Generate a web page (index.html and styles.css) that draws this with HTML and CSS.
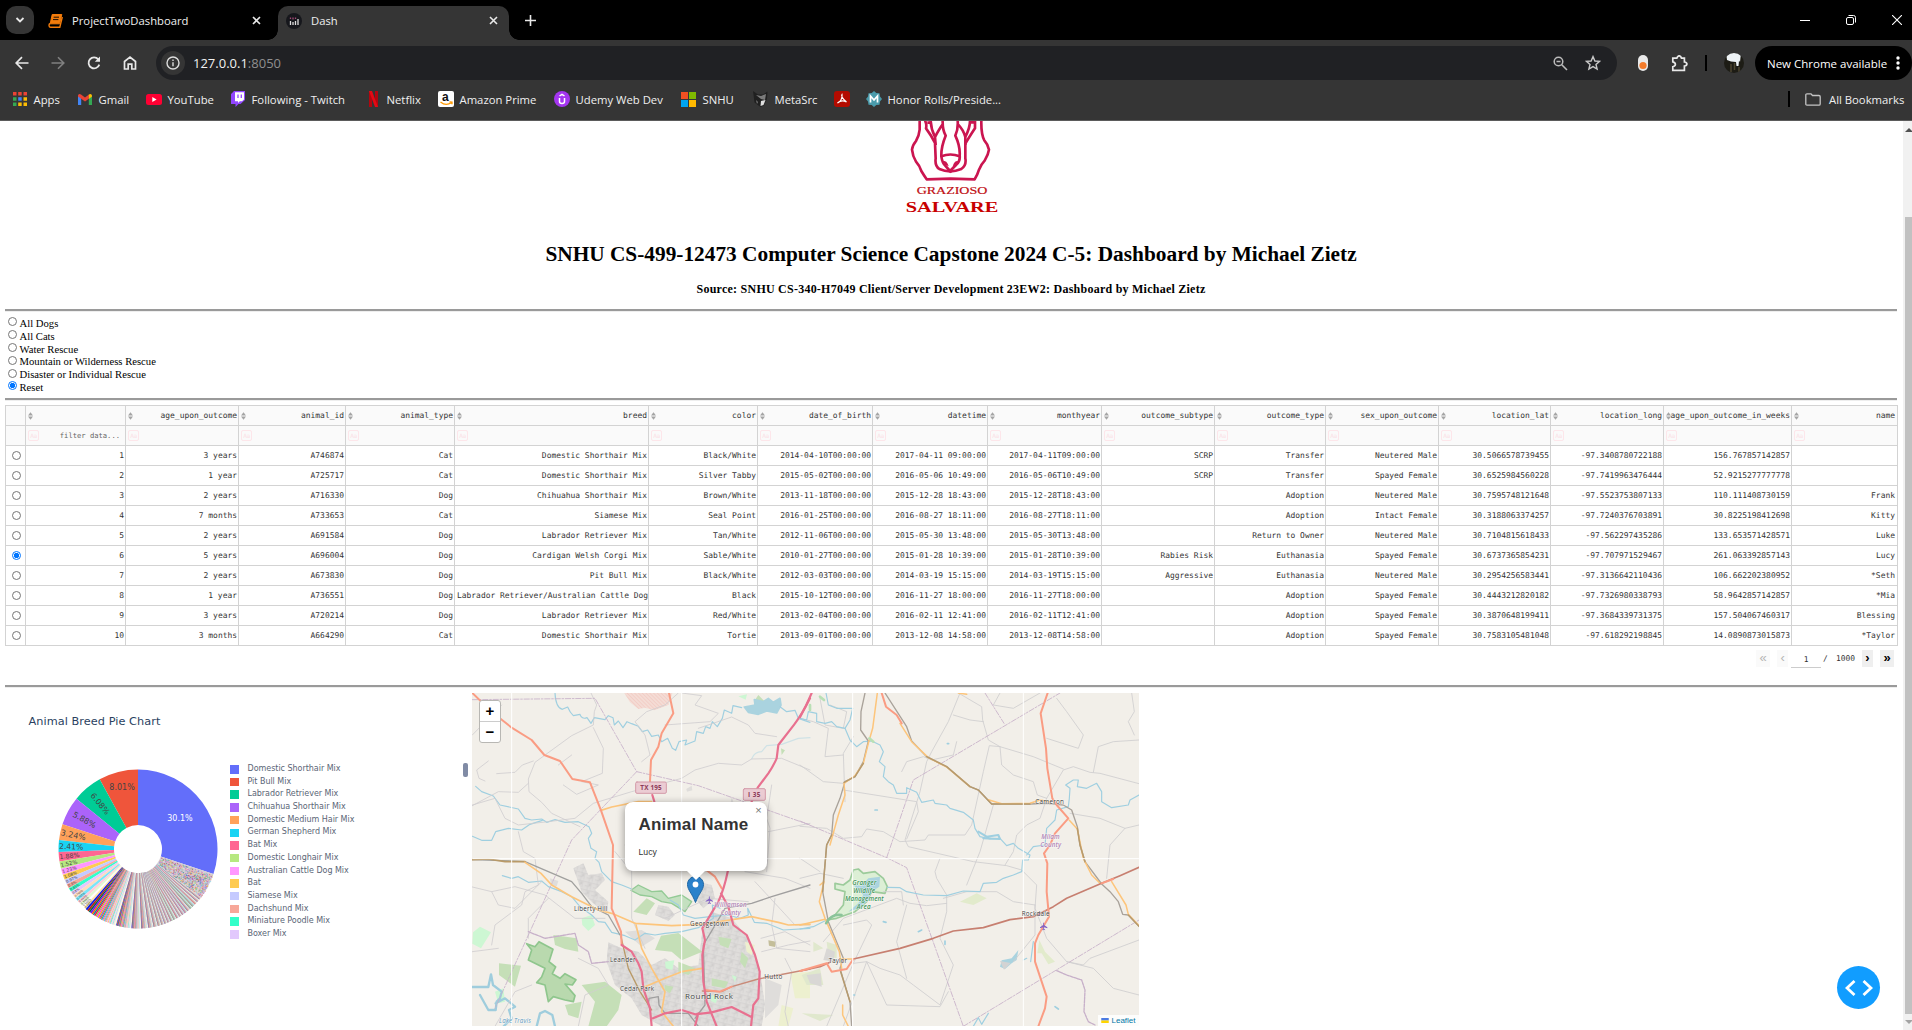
FILE: index.html
```html
<!DOCTYPE html>
<html lang="en">
<head>
<meta charset="utf-8">
<title>Dash</title>
<link rel="stylesheet" href="styles.css">
</head>
<body>
<header class="browser">
  <div class="tabstrip">
    <button class="tab-search"><svg width="10" height="8" viewBox="0 0 10 8"><path d="M1.5 2 5 5.5 8.500 2" fill="none" stroke="#e8e8e8" stroke-width="1.8"/></svg></button>
    <div class="tab tab-idle">
      <svg class="tab-icon" width="15" height="14" viewBox="0 0 15 14"><path d="M4.200 .5H13.800L11.600 9.800H2.200Z" fill="#f37c0b" stroke="#f37c0b" stroke-linejoin="round"/><path d="M2.200 9.500Q.8 10 1 11.600T2.600 13.200H11.800L14.300 3" fill="none" stroke="#f37c0b" stroke-width="1.400"/><path d="M5.600 3.200H11M5 5.600H10.400" stroke="#000" stroke-width=".9"/></svg>
      <span class="tab-title">ProjectTwoDashboard</span>
      <svg class="tab-close" width="9" height="9" viewBox="0 0 9 9"><path d="M1 1 8 8M8 1 1 8" stroke="#e8e8e8" stroke-width="1.6"/></svg>
    </div>
    <div class="tab tab-active">
      <svg class="tab-icon" width="16" height="16" viewBox="0 0 16 16"><circle cx="8" cy="8" r="8" fill="#16171c"/><path d="M4.500 8V12M7 9V12M9.500 8V12M12 6V12" stroke="#ddd" stroke-width="1.3"/><path d="M4.500 4.500V6M7 4.500V6.500M9.500 4.500V6" stroke="#a34a76" stroke-width="1.3"/></svg>
      <span class="tab-title">Dash</span>
      <svg class="tab-close" width="9" height="9" viewBox="0 0 9 9"><path d="M1 1 8 8M8 1 1 8" stroke="#e8e8e8" stroke-width="1.600"/></svg>
    </div>
    <svg class="new-tab" width="11" height="11" viewBox="0 0 11 11"><path d="M5.500 0V11M0 5.500H11" stroke="#e8e8e8" stroke-width="1.600"/></svg>
    <div class="window-buttons">
      <svg width="10" height="10" viewBox="0 0 10 10"><path d="M0 5.500H10" stroke="#fff"/></svg>
      <svg width="10" height="10" viewBox="0 0 10 10"><rect x=".5" y="2.500" width="7" height="7" rx="1.500" fill="none" stroke="#fff"/><path d="M2.500 .5H7.500Q9.500 .5 9.500 2.500V7.500" fill="none" stroke="#fff"/></svg>
      <svg width="10" height="10" viewBox="0 0 10 10"><path d="M0 0 10 10M10 0 0 10" stroke="#fff" stroke-width="1.100"/></svg>
    </div>
  </div>
  <div class="toolbar">
    <svg class="nav" width="14" height="14" viewBox="0 0 14 14"><path d="M13.500 7H1.500M7 1.200 1.200 7 7 12.800" fill="none" stroke="#e8e8e8" stroke-width="1.700"/></svg>
    <svg class="nav" width="14" height="14" viewBox="0 0 14 14"><path d="M.5 7H12.500M7 1.200 12.800 7 7 12.800" fill="none" stroke="#808080" stroke-width="1.600"/></svg>
    <svg class="nav" width="14" height="14" viewBox="0 0 14 14"><path d="M12.300 8.600A5.500 5.500 0 1 1 11.300 3.300" fill="none" stroke="#e8e8e8" stroke-width="1.800"/><path d="M13 .5V5.800H7.800Z" fill="#e8e8e8"/></svg>
    <svg class="nav" width="14" height="14" viewBox="0 0 14 14"><path d="M1.500 5.500 7 1.100 12.500 5.500V13H8.800V8.200H5.200V13H1.500Z" fill="none" stroke="#e8e8e8" stroke-width="1.700"/></svg>
    <div class="omnibox">
      <span class="site-info"><svg width="14" height="14" viewBox="0 0 14 14"><circle cx="7" cy="7" r="6" fill="none" stroke="#ddd" stroke-width="1.400"/><path d="M7 6.200V10.200M7 3.600V5" stroke="#ddd" stroke-width="1.400"/></svg></span>
      <span class="url">127.0.0.1<i>:8050</i></span>
      <svg class="omni-icon" width="15" height="15" viewBox="0 0 15 15"><circle cx="5.500" cy="5.500" r="4.300" fill="none" stroke="#bbb" stroke-width="1.500"/><path d="M3.500 5.500H7.500M8.800 8.800 14 14" stroke="#bbb" stroke-width="1.600"/></svg>
      <svg class="omni-icon" width="16" height="16" viewBox="0 0 16 16"><path d="M8 1.600 9.900 6 14.600 6.400 11 9.500 12.100 14.100 8 11.600 3.900 14.100 5 9.500 1.400 6.400 6.100 6Z" fill="none" stroke="#c8c8c8" stroke-width="1.400"/></svg>
    </div>
    <svg class="ext" width="12" height="16" viewBox="0 0 12 16"><rect x="1" width="10" height="16" rx="5" fill="#e9e9e9"/><circle cx="6" cy="10.500" r="3.600" fill="#f47b2a"/></svg>
    <svg class="puzzle" width="17" height="17" viewBox="0 0 17 17"><path d="M1.800 3.200H5.800Q6.500 .8 8.200 .8T10.500 3.200H13.400V7Q15.900 7.300 15.900 9T13.400 11V15.300H1.800V11.800Q4.400 11.200 4.400 9.300T1.800 6.800Z" fill="none" stroke="#e8e8e8" stroke-width="1.700"/></svg>
    <span class="divider"></span>
    <svg class="avatar" width="20" height="20" viewBox="0 0 20 20"><defs><clipPath id="av"><circle cx="10" cy="10" r="10"/></clipPath></defs><g clip-path="url(#av)"><path fill="#1d1c15" d="M0 0H20V20H0Z"/><path d="M2 0H17L16 9 15 7.500 14.500 13 12.500 13 12 9 7 8.500 3 7Z" fill="#eef3f6"/><path d="M7 11V19M10.500 10V17M15 14V19" stroke="#4c452f" stroke-width="1.500"/></g></svg>
    <div class="update-pill"><span>New Chrome available</span><svg width="4" height="14" viewBox="0 0 4 14"><circle cx="2" cy="2" r="1.700" fill="#fff"/><circle cx="2" cy="7" r="1.700" fill="#fff"/><circle cx="2" cy="12" r="1.700" fill="#fff"/></svg></div>
  </div>
  <nav class="bookmarks">
    <a class="bm bm-apps"><svg width="14" height="14" viewBox="0 0 14 14"><path fill="#ea4335" d="M0 0h3.500v3.500H0zM5.200 0h3.500v3.500H5.200zM10.500 0H14v3.500h-3.500z"/><path fill="#34a853" d="M0 5.200h3.500v3.500H0zM0 10.500h3.500V14H0z"/><path fill="#4285f4" d="M5.200 5.200h3.500v3.500H5.200z"/><path fill="#fbbc04" d="M10.500 5.200H14v3.500h-3.500zM5.200 10.500h3.500V14H5.200zM10.500 10.500H14V14h-3.500z"/></svg>Apps</a>
    <a class="bm bm-gmail"><svg width="14" height="11" viewBox="0 0 14 11"><path fill="#4285f4" d="M0 1.500H3.200V11H0z"/><path fill="#34a853" d="M10.800 1.500H14V11h-3.200z"/><path fill="#ea4335" d="M0 1.500Q.8-.8 3 .5L7 3.600 11 .5 10.800 4.800 7 7.600 3.200 4.800 0 2.500z"/><path fill="#fbbc04" d="M10.800.6Q13.600-.8 14 1.800V2.600L10.800 4.900z"/></svg>Gmail</a>
    <a class="bm bm-youtube"><svg width="16" height="11" viewBox="0 0 16 11"><rect width="16" height="11" rx="2.500" fill="#ff0033"/><path d="M6.300 3 10.600 5.500 6.300 8Z" fill="#fff"/></svg>YouTube</a>
    <a class="bm bm-twitch"><svg width="14" height="16" viewBox="0 0 14 16"><path d="M3 0H14V9L9.500 13H7.500L4.500 16V13H0V3Z" fill="#9146ff"/><path d="M4 1.200H13V8.500L11 10.300H8.800L7 12V10.300H4Z" fill="#fff"/><path d="M7 3.500V7M10.300 3.500V7" stroke="#9146ff" stroke-width="1.300"/></svg>Following - Twitch</a>
    <a class="bm bm-netflix"><svg width="9" height="16" viewBox="0 0 9 16"><path d="M0 0H3V16H0zM6 0H9V16H6z" fill="#b1060f"/><path d="M0 0H3L9 16H6Z" fill="#e50914"/></svg>Netflix</a>
    <a class="bm bm-amazon"><svg width="16" height="16" viewBox="0 0 16 16"><rect width="16" height="16" rx="2" fill="#fff"/><text x="4" y="10" class="amazon-a">a</text><path d="M2.500 11Q8 15.500 13.500 11.500M11.500 10.800 14 11V13.200" fill="none" stroke="#f90" stroke-width="1.300"/></svg>Amazon Prime</a>
    <a class="bm bm-udemy"><svg width="16" height="16" viewBox="0 0 16 16"><circle cx="8" cy="8" r="8" fill="#a435f0"/><path d="M5.500 7V10.500Q5.500 12.500 8 12.500T10.500 10.500V7M5.500 5 8 3.300 10.500 5" fill="none" stroke="#fff" stroke-width="1.500"/></svg>Udemy Web Dev</a>
    <a class="bm bm-snhu"><svg width="15" height="15" viewBox="0 0 15 15"><path fill="#f25022" d="M0 0h7v7H0z"/><path fill="#7fba00" d="M8 0h7v7H8z"/><path fill="#00a4ef" d="M0 8h7v7H0z"/><path fill="#ffb900" d="M8 8h7v7H8z"/></svg>SNHU</a>
    <a class="bm bm-metasrc"><svg width="15" height="16" viewBox="0 0 15 16"><path d="M0 0 5 3.500 10 3.500 14.500 .5 14 8 11 14.500 7.500 16 1.500 11.500Z" fill="#202020"/><path d="M3 4 8 5 13 3 12 9 8 8ZM3 9 5 11 4 13Z" fill="#7b7b7b"/><path d="M8 10 12.500 9 10.500 14 7.500 15Z" fill="#dedede"/></svg>MetaSrc</a>
    <a class="bm bm-acrobat"><svg width="16" height="16" viewBox="0 0 16 16"><rect width="16" height="16" rx="3" fill="#b30b00"/><path d="M8 3.500C7 4.500 8.500 8 12.500 11 8.500 9 6 9.800 3.500 12 6.500 11 8.500 7 8 3.500Z" fill="none" stroke="#fff" stroke-width="1.200"/></svg></a>
    <a class="bm bm-honor"><svg width="16" height="16" viewBox="0 0 16 16"><path d="M8 0 10.300 2 13.500 2.300 14 5.600 16 8 14 10.400 13.500 13.700 10.300 14 8 16 5.700 14 2.500 13.700 2 10.400 0 8 2 5.600 2.500 2.300 5.700 2Z" fill="#4a9bab"/><path d="M4.500 11.500V5L8 9 11.500 5V11.500" fill="none" stroke="#fff" stroke-width="1.700"/></svg>Honor Rolls/Preside...</a>
    <span class="divider bm-divider"></span>
    <a class="bm bm-all"><svg width="16" height="13" viewBox="0 0 16 13"><path d="M.8 2Q.8 .8 2 .8H6L7.500 2.500H14Q15.200 2.500 15.200 3.700V11Q15.200 12.200 14 12.200H2Q.8 12.200 .8 11Z" fill="none" stroke="#c4c4c4" stroke-width="1.300"/></svg>All Bookmarks</a>
  </nav>
</header>

<div class="viewport">
<main class="page">
  <svg class="logo" width="122" height="99" viewBox="0 18 366 297">
    <g fill="none" stroke="#cb1550" stroke-width="8" stroke-linejoin="round">
      <path d="M89 16V44Q87 64 78 78Q67 92 66 104Q68 124 78 140Q89 152 94 168Q103 183 110 193L182 191 254 193Q262 181 267 164Q275 146 284 137Q295 119 297 104Q294 88 283 76Q273 58 274 16"/>
      <path d="M105 16Q111 30 108 40Q124 61 135 84L137 130Q134 153 148 162Q180 176 214 162Q230 151 226 130V86Q244 56 255 40V16"/>
      <path d="M122 18Q123 42 135 66L137 90M135 66Q148 42 158 28M158 16Q157 44 167 62Q153 96 154 124Q157 144 165 151L180 168 198 150Q211 139 209 122Q211 94 196 62Q205 43 203 16M204 28Q220 44 226 66V90M226 66Q240 38 240 18"/>
      <path d="M154 124Q181 113 209 124M112 23H120M242 22H252"/>
    </g>
    <path d="M159 139Q168 135 173 146L176 154 166 149ZM205 139Q196 135 191 146L188 154 199 149ZM176 169H189L182 175Z" fill="#cb1550"/>
    <text x="80" y="237" class="logo-small" textLength="212" lengthAdjust="spacingAndGlyphs">GRAZIOSO</text>
    <text x="47" y="290" class="logo-big" textLength="278" lengthAdjust="spacingAndGlyphs">SALVARE</text>
  </svg>
  <h1>SNHU CS-499-12473 Computer Science Capstone 2024 C-5: Dashboard by Michael Zietz</h1>
  <h5>Source: SNHU CS-340-H7049 Client/Server Development 23EW2: Dashboard by Michael Zietz</h5>
  <hr>
  <div class="filters">
    <label><i class="radio"></i>All Dogs</label>
    <label><i class="radio"></i>All Cats</label>
    <label><i class="radio"></i>Water Rescue</label>
    <label><i class="radio"></i>Mountain or Wilderness Rescue</label>
    <label><i class="radio"></i>Disaster or Individual Rescue</label>
    <label><i class="radio on"></i>Reset</label>
  </div>
  <hr>
  <table class="grid" id="grid"></table>
  <div class="pager">
    <span class="pg off">«</span><span class="pg off narrow">‹</span><span class="pg-input">1</span><span class="pg-sep">/</span><span class="pg-total">1000</span><span class="pg narrow next">›</span><span class="pg last">»</span>
  </div>
  <hr>
  <section class="widgets">
    <div class="chart">
      <h2>Animal Breed Pie Chart</h2>
      <div class="chart-body">
        <svg class="pie" id="pie" width="160" height="160" viewBox="-80 -80 160 160"></svg>
        <ul class="legend" id="legend"></ul>
        <span class="legend-scroll"></span>
      </div>
    </div>
    <div class="map">
      <svg class="map-canvas" width="667" height="333" viewBox="0 0 667 333">
        <defs>
          <pattern id="streets" width="26" height="24" patternUnits="userSpaceOnUse" patternTransform="rotate(14)"><path d="M0 5H26M9 0V24M0 17H15M18 5V24" stroke="#cbc9c9" stroke-width="1.500" fill="none"/><path d="M11 7h6v8h-6z" fill="#d0cecd"/></pattern>
          <pattern id="hatch" width="8" height="8" patternUnits="userSpaceOnUse" patternTransform="rotate(45)"><path d="M0 0H8" stroke="#efb5ac" stroke-width="2"/></pattern>
          <g id="plane"><path d="M-1.300-10Q0-13 1.300-10V-4L11 3V5.500L1.300 2.500V7L4.500 10V12L0 10.500-4.500 12V10L-1.300 7V2.500L-11 5.500V3L-1.300-4Z" fill="#8461c4"/></g>
        </defs>
        <rect width="667" height="333" fill="#f2efe9"/>
        <!-- western half -->
        <g transform="translate(-7 -8) scale(.33333)" fill="none" stroke-linejoin="round" stroke-linecap="round">
          <path d="M478 24H622L610 60 568 76 540 68 520 72 495 52Z" fill="#f4dcd5"/><path d="M478 24H622L610 60 568 76 540 68 520 72 495 52Z" fill="url(#hatch)"/>
          <g fill="#dfdddb">
            <path d="M430 772 470 790 520 800 560 840 600 820 640 850 700 840 712 740 740 680 800 700 850 760 884 850 900 960 890 1024H590L530 990 500 940 450 900 425 830Z"/>
            <path d="M325 550 355 535 370 570 410 565 420 585 390 615 430 650 425 690 380 650 350 620Z"/>
            <path d="M580 660 610 665 630 690 610 708 570 690ZM700 590 740 600 750 640 715 670 690 640ZM900 880 950 900 940 960 900 1000Z"/>
            <path d="M480 740 530 735 570 760 530 785ZM255 580 280 588 275 604 258 600ZM664 312 680 302 682 316 666 320ZM800 335 808 360 796 360Z"/>
          </g>
          <path d="M430 772 470 790 520 800 560 840 600 820 640 850 700 840 712 740 740 680 800 700 850 760 884 850 900 960 890 1024H590L530 990 500 940 450 900 425 830Z" fill="url(#streets)"/>
          <path d="M325 550 355 535 370 570 410 565 420 585 390 615 430 650 425 690 380 650 350 620ZM580 660 610 665 630 690 610 708 570 690ZM700 590 740 600 750 640 715 670 690 640Z" fill="url(#streets)"/>
          <g fill="#c5dfb7">
            <path d="M102 835 168 842 150 905 102 870ZM588 752 640 744 712 800 650 826 620 800 570 795ZM505 680 545 640 570 655 545 690ZM265 750 335 760 340 800 300 792 270 780ZM350 900 420 890 470 930 460 975 425 1024H370L390 950ZM300 960 350 950 340 1000 310 990ZM740 880 790 890 780 910 740 902ZM640 830 690 850 670 870 640 860ZM880 30 910 60 895 70 870 45ZM948 190 960 196 950 210ZM600 900 625 905 615 925 598 915ZM760 755 800 762 790 790 765 780ZM830 800 850 820 840 850 825 830Z"/>
          </g>
          <path d="M24 742 45 725 78 742 48 790 22 776ZM350 700 380 690 390 720 370 738 352 720ZM90 920 115 910 120 950 100 955ZM600 830 628 826 622 855 602 850ZM820 34 846 28 842 44ZM740 930 760 935 752 955 738 948ZM800 870 815 875 810 892Z" fill="#cdf7d3"/>
          <g fill="#edf0cf"><path d="M976 865 1035 860V940H990ZM950 960 985 970 970 1024H940ZM840 770 870 780 860 810 845 800Z"/></g>
          <path d="M910 766 934 770 930 786 912 782Z" fill="#c4be9a"/>
          <path d="M185 776 210 785 222 770 264 793 252 830 272 846 262 866 285 880 300 866 333 884 322 900 300 897 330 932 325 950 300 945 265 935 250 950 240 900 215 893 230 876 240 850 190 825 200 795Z" fill="#b9d9ae" stroke="#8fc68d" stroke-width="5"/>
          <path d="M498 616 520 600 560 620 590 618 610 640 650 630 680 650 660 680 620 655 590 650 560 635 525 630Z" fill="#c4e0c0" stroke="#93ca95" stroke-width="4"/>
          <path d="M838 66 870 60 868 44 895 50 910 40 925 52 945 40 948 60 935 84 905 78 880 88 850 82Z" fill="#aad3df" stroke="#aad3df" stroke-width="5"/>
          <path d="M22 906H70L78 868 84 900 110 920 105 940 95 950 92 975 70 975 45 930M92 955 120 940 150 965 132 975 140 1000 116 1024M215 1024 225 985 240 978 262 990 270 1024" stroke="#9fcddd" stroke-width="7"/>
          <g stroke="#9fcfe0" stroke-width="3.500">
            <path d="M270 24Q272 68 292 73L308 66Q315 83 325 92L345 88Q350 104 366 98L378 115 388 98 420 104 430 92 444 98 448 120 460 108 474 128 486 110 500 116 520 124 532 140 548 135 560 154 580 150 590 170 608 160 622 190 632 196 642 170 665 165 660 180 690 168 695 140 715 145 722 125 735 130 742 110 757 125 772 100 778 75 800 85 804 62 830 68"/>
            <path d="M945 65 965 80 990 76 1000 100 1035 112"/><path d="M860 222Q868 200 890 200L905 182 950 178 1000 160 1035 158" stroke="#cfe2e6"/>
            <path d="M32 304 50 320 85 333 105 360 160 372 180 400 200 405 230 402 245 412 270 404 300 412 340 410 372 425 380 445 370 460 378 490 395 500 390 520 402 532 410 560 440 590 470 600 500 612"/>
            <path d="M22 454 50 466 80 466 92 440 130 430 170 435 195 418 232 406"/>
            <path d="M112 572 140 580 160 575 190 592 230 588 250 605 290 620 320 635 345 665 380 690 400 710 420 712 440 742 480 752 510 765 540 745 570 750 600 745 650 740 700 728 745 700 742 660 765 670"/>
            <path d="M615 645 640 660 655 690 690 700 735 695 790 690 825 700 850 690 848 670 868 712 905 715 955 735 1035 730"/>
          </g>
          <g stroke="#d0ced0" stroke-width="2.500">
            <path d="M378 24 395 60 388 80 385 120 320 152 210 232 190 282 192 320 230 352 260 385 345 425M385 128 415 190 412 265 350 290 400 300 335 328 295 300M190 295 160 322 100 320 22 362M22 360 90 340 120 400 160 420 250 410 330 400 385 355 500 320 650 280 690 255 760 235 830 240 860 222 950 220 1035 255"/>
            <path d="M95 266 150 262 172 240 205 228M70 228 35 255 42 280 60 288M640 24 600 60 545 80 510 110 540 150 555 210 530 230M650 24 710 32 690 60 760 85 735 110 600 120M700 130 800 96 850 120 870 145 935 155M160 440 175 500 210 520 220 600 180 620 170 660 90 720 80 780M22 606 80 620 150 605 240 630 330 700 420 700M80 620 100 660 150 670 230 590M250 640 190 700 190 760M450 500 500 560 500 700 540 790M480 480 640 510 690 570M600 700 730 640 850 650M930 640 920 720 935 790 1035 800M870 590 990 720 1035 720M890 800 970 780 1035 768M910 440 1035 415M920 300 905 400 915 430 905 560M840 560 960 580 1035 610M22 800 100 790M90 1024 150 920 200 900M340 820 400 850 430 900 360 930 340 1024M110 60 22 150M280 240 320 210"/>
            <path d="M960 820 980 860 960 980 970 1024M888 760 960 740 1035 780"/>
          </g>
          <g stroke="#c7b0c9" stroke-width="2.500" stroke-dasharray="16 5 5 5"><path d="M22 44 390 40 515 260 700 302 1035 420M515 260 320 465 90 970"/><path d="M190 740 240 760 330 745 340 780 370 800 380 835 430 830" stroke-width="4" stroke-dasharray="8 3"/></g>
          <path d="M22 524 110 527 180 530 250 560 320 590 350 625 380 665 430 690 465 750" stroke="#a0a09e" stroke-width="4"/>
          <path d="M550 960 552 940 580 935 582 960 600 985 670 985 700 1024M690 1000 720 960 715 780 780 670 860 655 920 635 1035 600" stroke="#a09f9f" stroke-width="4"/>
          <path d="M22 524 70 522 120 530 180 530" stroke="#b99a68" stroke-width="5"/><path d="M468 755 490 850 525 920 560 975" stroke="#b99a68" stroke-width="4"/>
          <g stroke="#fdc57b" stroke-width="5"><path d="M180 532 228 565 260 600 320 635 400 675 440 685 510 715 620 722 710 718 860 695 940 712 970 720 1035 718M408 376 440 366 520 350 560 350M512 715 530 790 560 850 580 885 600 920 590 980 625 1024M540 905 600 880 650 860 712 850"/></g>
          <path d="M712 918 770 920 800 905 880 882 1035 852" stroke="#c88a78" stroke-width="4"/>
          <g stroke="#fa9c83" stroke-width="6"><path d="M22 24 80 80 140 128 200 165 238 210 285 228 322 282 375 292 408 376 444 480 440 670 468 740 470 780M612 24 625 85 590 145 580 185 558 225 555 290M720 552 750 575 770 610M720 915 765 920 800 905"/></g>
          <g stroke="#e8708f" stroke-width="6.500"><path d="M1035 40Q1010 90 988 118L940 180 935 220Q924 245 910 265L878 308 860 350 788 560Q778 610 760 650L712 730 720 765 712 810 715 890 725 950 755 1024M562 330 568 350M768 625 790 665 805 720 845 750 870 810 884 860 880 940 865 960 858 1024M470 780 500 800 520 835 530 860 535 910 555 970 560 1024M564 1000 600 985 650 975 690 988 740 982 800 966 858 995M700 985 690 1024"/></g>
          <path d="M140 24V1024M650 24V1024M22 521H1035" stroke="#fff" stroke-width="3" stroke-linecap="butt"/>
          <g class="shield"><rect x="512" y="291" width="92" height="34" rx="4" fill="#ebccd3" stroke="#d39aa9" stroke-width="3"/><rect x="835" y="311" width="66" height="35" rx="4" fill="#ebccd3" stroke="#d39aa9" stroke-width="3"/><text x="526" y="315" textLength="64">TX 195</text><text x="849" y="336" textLength="37">I 35</text></g>
          <g class="place">
            <text x="327" y="677" textLength="100">Liberty Hill</text><text x="675" y="724" textLength="117">Georgetown</text><text x="435" y="832" textLength="77">Leander</text><text x="465" y="919" textLength="102">Cedar Park</text><text x="898" y="883" textLength="54">Hutto</text><text x="660" y="943" textLength="144" class="city">Round Rock</text>
            <text x="748" y="666" textLength="97" class="county">Williamson</text><text x="767" y="690" textLength="60" class="county">County</text><text x="102" y="1014" textLength="96" class="lake">Lake Travis</text>
          </g>
          <use href="#plane" transform="translate(733 645)"/>
        </g>
        <!-- eastern half -->
        <g transform="translate(328 -8) scale(.33333)" fill="none" stroke-linejoin="round" stroke-linecap="round">
          <path d="M105 595 130 600 150 585 160 555 175 552 190 565 225 560 250 580 262 605 255 625 215 620 200 650 165 680 110 700 80 705 105 690 130 660 135 620 105 612Z" fill="#dcefd5" stroke="#9ccb9b" stroke-width="5"/>
          <path d="M205 580 240 575 238 605 215 620 205 645 180 668 145 680 175 655 190 630 160 600 185 602Z" fill="#aad3df"/>
          <path d="M605 826 635 820 655 795 650 825 635 835 615 852 600 845Z" fill="#aad3df"/><path d="M600 828 632 834 612 854Z" fill="#d3d3d3"/>
          <path d="M718 765 735 800 765 830 745 838 725 805 712 805ZM480 650 530 625 560 640 520 660Z" fill="#e2ebcc"/>
          <path d="M5 870 60 850 70 900 20 900ZM80 770 110 780 110 820 85 815ZM40 770 70 790 40 800ZM5 985 100 990 60 1008Z" fill="#e0e8cd"/><path d="M20 870 62 865 65 905 30 895ZM80 790 105 800 100 830 70 825Z" fill="#d9d7d5"/>
          <g stroke="#d0ced0" stroke-width="2.600">
            <path d="M480 24 445 110 395 200 380 230 360 320 315 465 325 485 520 530 620 542 665 555 710 600 705 670 740 760 800 830 880 850 940 910 1017 930"/>
            <path d="M475 24 545 65 548 105 565 165 600 185 605 240 640 270 700 290 712 330 740 340 790 255 820 245 870 262 900 265 1017 296M600 185 700 215 790 252M460 90 510 105 550 110M130 210 75 215 85 130 40 110 0 100M0 240 70 290 130 295M130 315 350 350 355 380 320 462M135 350 130 205 160 155M0 424 80 430 130 460 185 455 200 432 250 440 300 470 375 465 385 450 495 450 515 420 550 260 568 182 600 185"/>
            <path d="M0 580 60 565 130 580M420 520 405 560 410 580 440 630 440 680 420 760 460 840 420 960 340 900 300 870 240 850 200 830 160 835M440 655 380 662 330 655 290 640 130 700 70 770M430 640 500 620 590 620 640 650 705 660M705 660 705 750 640 830M580 360 540 500 500 600M740 340 720 400 680 420 650 450 640 500 615 540M810 385 900 400 975 430 1017 420M975 430 930 480 920 580M600 24 580 60 640 70 720 24M740 160 835 190 850 150 800 80 770 40M1017 165 940 170 895 185 880 262M995 24 1003 80 985 110 1003 150M60 40 75 120 130 130 140 80 90 60M130 720 200 705 215 720 160 835M320 660 290 770 320 880M130 1024 200 830 260 960 420 965 445 920M0 520 60 560M305 260 320 230 370 215 395 225 460 210 470 170M800 830 850 840 870 820 1017 765M160 835 80 1024M250 620 305 620 310 660"/>
          </g>
          <g stroke="#c7b0c9" stroke-width="2.600" stroke-dasharray="16 5 5 5"><path d="M0 408 260 518 320 548 410 800 490 1024M260 518 340 285 780 24M555 24 612 115M490 1024 1017 705"/><path d="M770 857 800 870 845 885 855 915 852 980 865 1010 885 1020" stroke-width="4" stroke-dasharray="8 3"/></g>
          <g stroke="#9fcfe0" stroke-width="3.500">
            <path d="M0 100 20 105 25 80 50 85 50 110 75 115 95 110 110 125 135 130 150 165 170 185 190 170 215 168 240 180 250 200 238 230 255 245 250 275 265 290 280 300 290 325 320 325 320 308 350 322 365 352 400 345 405 355 440 360 450 370 490 382 520 405 525 430 540 455 570 462 600 460 620 482 640 475 655 490 690 510 685 525 668 525 665 560 640 570 610 580 590 592 550 595 540 620 490 618 440 632 370 630 320 620 300 608 262 607"/>
            <path d="M135 130 150 105 158 70 110 70 85 60 78 24M680 510 700 485 735 480 740 430 765 405 770 375 805 365 808 340 810 310 797 300 820 285 835 285 832 305 860 310 890 295 905 320 905 350 935 368 985 360 990 345 1017 330M0 732 40 725 80 705M520 1024 535 998 545 1018 565 985M700 770 692 830M670 825 680 820"/>
            <path d="M535 440 560 455 595 450 600 462 550 460" stroke-width="6"/>
          </g>
          <path d="M195 24 183 80 182 135 205 168 190 230 165 275 135 290 120 340 100 390 95 450 80 480 68 620 85 710 130 820 120 850 150 950 155 1024M255 24 320 125 335 168 380 215 440 245 510 305 535 315 575 357H690L740 355 790 360 815 375 832 425 840 480 855 530 905 597 930 620 955 650 968 688 985 690 1017 724" stroke="#a9a29a" stroke-width="4"/>
          <g stroke="#fdc57b" stroke-width="4.500"><path d="M232 24 218 130 205 175 190 235 165 272 132 295 135 330 115 390 90 480M60 600 72 590 58 650 75 700 118 800 125 850M128 960 128 990 145 1024M0 720 75 703M475 24 500 28M300 115 335 170 385 218 440 246 510 305M565 344 605 356 690 355 720 345 750 350M808 406 832 432 850 520 875 570 900 595M935 590 978 660 985 688 1017 722M118 822 160 822"/></g>
          <path d="M190 235 165 275 132 292M95 450 80 480 68 620M380 215 440 245 510 305 535 315 575 357 690 357M832 430 840 480 855 530M985 690 1017 724M122 860 150 950" stroke="#b69a6e" stroke-width="4.500"/>
          <path d="M0 858 60 845 90 832M160 822 300 790 400 760 460 738 530 730 550 728 630 704 700 695 760 665 800 640 905 595 960 572 1017 547" stroke="#c77f70" stroke-width="5"/>
          <g stroke="#fa9c83" stroke-width="6"><path d="M743 24 722 85 738 190 742 250 757 340 770 360 805 400 765 445 750 480 732 505 742 535 740 620 747 695 715 750 705 775 705 830 740 935 735 970 715 1024M245 24 258 65 290 90 305 115M0 858 80 835 95 860 140 852 160 822M905 595 940 582"/></g>
          <path d="M35 24Q20 60 0 97" stroke="#e8708f" stroke-width="6.500"/>
          <path d="M78 715Q95 685 125 690" stroke="#8bc39a" stroke-width="7"/><path d="M208 160 220 170M60 35 72 45M30 60V75" stroke="#b9e0b5" stroke-width="8"/><path d="M225 375H232M442 176H446M250 710 258 712M355 740 365 735M765 965 775 972M435 768V778M160 930H164" stroke="#9fcfe0" stroke-width="5"/>
          <path d="M158 24V1024M670 24V1024M0 521H1017" stroke="#fff" stroke-width="3" stroke-linecap="butt"/>
          <g class="place"><text x="706" y="358" textLength="86">Cameron</text><text x="665" y="693" textLength="84">Rockdale</text><text x="86" y="833" textLength="55">Taylor</text>
            <text x="724" y="461" textLength="55" class="county">Milam</text><text x="721" y="485" textLength="62" class="county">County</text>
            <text x="157" y="600" textLength="72" class="park">Granger</text><text x="160" y="624" textLength="65" class="park">Wildlife</text><text x="135" y="648" textLength="116" class="park">Management</text><text x="170" y="671" textLength="42" class="park">Area</text></g>
          <use href="#plane" transform="translate(731 724)"/>
        </g>
      </svg>
      <div class="zoom-control"><span>+</span><span>−</span></div>
      <svg class="marker" width="17" height="27" viewBox="0 0 17 27"><path d="M8.500 .5C4 .5 .5 4 .5 8.500 .5 14 5 17 8.500 26.500 12 17 16.500 14 16.500 8.500 16.500 4 13 .5 8.500 .5Z" fill="#2a81cb" stroke="#2369a5"/><circle cx="8.500" cy="8.500" r="2.900" fill="#fff"/></svg>
      <div class="popup"><span class="popup-close">×</span><strong>Animal Name</strong><p>Lucy</p></div>
      <div class="attribution"><svg width="8" height="5" viewBox="0 0 12 8"><path fill="#4c7be1" d="M0 0h12v4H0z"/><path fill="#ffd500" d="M0 4h12v4H0z"/></svg>Leaflet</div>
    </div>
  </section>
  <button class="debug"><svg width="28" height="16" viewBox="0 0 28 16"><path d="M9.500 1 2 8 9.500 15M18.500 1 26 8 18.500 15" fill="none" stroke="#fff" stroke-width="2.800"/></svg></button>
</main>
<aside class="scrollbar"><span class="arrow up"></span><span class="thumb"></span><span class="arrow down"></span></aside>
</div>
<script src="app.js"></script>
</body>
</html>
```
FILE: styles.css
```css
* { box-sizing: border-box; }
body { margin: 0; width: 1912px; height: 1030px; overflow: hidden; background: #fff; font-family: "Liberation Serif", "Times New Roman", serif; display: flex; flex-direction: column; }
svg { display: block; flex: none; }
button { border: 0; padding: 0; }

/* browser frame */
.browser { height: 121px; flex: none; background: #353535; border-bottom: 1px solid #5b5b5b; color: #f0f0f0; font: 11.7px "Open Sans", "Noto Sans", sans-serif; white-space: nowrap; }
.tabstrip { height: 40px; background: #000; display: flex; align-items: flex-start; padding: 6px 10px 0 6px; }
.tab-search { width: 28px; height: 28px; border-radius: 10px; background: #353535; display: grid; place-items: center; }
.tab { height: 34px; display: flex; align-items: center; padding-bottom: 5px; }
.tab-idle { width: 244px; padding-left: 14px; padding-right: 17px; }
.tab-active { width: 231px; padding-left: 8px; padding-right: 11px; background: #353535; border-radius: 10px 10px 0 0; position: relative; }
.tab-active::before, .tab-active::after { content: ""; position: absolute; bottom: 0; width: 10px; height: 10px; }
.tab-active::before { left: -10px; background: radial-gradient(circle at 0 0, #000 9.500px, #353535 10px); }
.tab-active::after { right: -10px; background: radial-gradient(circle at 100% 0, #000 9.500px, #353535 10px); }
.tab-title { margin-left: 9px; flex: 1; font-size: 11.25px; }
.new-tab { margin: 9px 0 0 15.500px; }
.window-buttons { margin-left: auto; display: flex; gap: 36px; padding-top: 9px; }
.toolbar { height: 46px; display: flex; align-items: center; padding-left: 15px; }
.nav { margin-right: 22px; }
.omnibox { width: 1461px; height: 34px; margin-left: -3px; border-radius: 17px; background: #202124; display: flex; align-items: center; padding: 0 16px 0 5px; }
.site-info { width: 24px; height: 24px; border-radius: 50%; background: #353535; display: grid; place-items: center; }
.url { margin-left: 8px; flex: 1; font-size: 13px; color: #f1f1f1; }
.url i { font-style: normal; color: #8f8f8f; }
.omni-icon { margin-left: 17px; }
.ext { margin-left: 20px; }
.puzzle { margin-left: 22px; }
.divider { width: 2px; height: 16px; background: #000; margin-left: 17px; }
.avatar { margin-left: 17px; }
.update-pill { margin-left: 11px; width: 157px; height: 34px; border-radius: 17px; background: #000; color: #fff; display: flex; align-items: center; justify-content: space-between; padding: 0 12px; font-size: 11.500px; }
.bookmarks { display: flex; align-items: center; height: 28px; padding-right: 7px; margin: -1px 0 0 12.500px; font-size: 11.300px; }
.bm { display: flex; align-items: center; gap: 7px; flex: none; }
.bm-apps { width: 65px; } .bm-gmail { width: 68px; } .bm-youtube { width: 85px; gap: 6px; } .bm-twitch { width: 138px; } .bm-netflix { width: 69px; gap: 9px; }
.bm-amazon { width: 116px; gap: 6px; } .bm-udemy { width: 127px; gap: 6px; } .bm-snhu { width: 72px; } .bm-metasrc { width: 81px; } .bm-acrobat { width: 32px; } .bm-honor { gap: 6px; }
.bm-divider { margin-left: auto; } .bm-all { margin-left: 15px; width: 100px; gap: 8px; }
.amazon-a { font: bold 12px "Liberation Sans", sans-serif; fill: #111; }

/* page */
.viewport { flex: 1; display: flex; min-height: 0; }
.page { width: 1903px; padding: 0 6px 0 5px; overflow: hidden; position: relative; }
.logo { margin: 0 auto; }
.logo-small { font: 29px "Liberation Serif", serif; fill: #c00d12; stroke: #c00d12; stroke-width: .5; }
.logo-big { font: bold 44px "Liberation Serif", serif; fill: #c80000; }
h1 { margin: 22px 0 0; font-size: 21.330px; line-height: 25px; text-align: center; }
h5 { margin: 15px 0 13px; font-size: 12px; letter-spacing: .24px; line-height: 14px; text-align: center; }
hr { margin: 0; width: 1892px; height: 3px; border: 0; border-top: 2px solid #9a9a9a; border-bottom: 1px solid #eee; }
.filters { padding: 5px 0 6px 3px; height: 86px; }
.filters label { display: flex; height: 12.800px; align-items: center; font-size: 10.670px; line-height: 12.800px; }
.radio { flex: none; display: block; width: 9px; height: 9px; border: 1px solid #767676; border-radius: 50%; background: #fff; }
.filters .radio { margin: -3px 2.500px 0 0; width: 9px; height: 9px; }
.radio.on { border-color: #0075ff; background: radial-gradient(circle, #0075ff 2.300px, #fff 3px); }

.grid { margin-top: 4px; width: 1893px; border-collapse: collapse; table-layout: fixed; font: 7.950px "DejaVu Sans Mono", monospace; color: #333; }
.grid th, .grid td { height: 20px; padding: 0 1px 0 2px; border: 1px solid #d3d3d3; text-align: right; font-weight: normal; white-space: nowrap; line-height: 10px; }
.grid th:last-child, .grid td:last-child { padding-right: 2px; }
.grid thead { background: #fafafa; }
.grid td:first-child .radio { margin: 0 auto 0 4px; }
.head, .filt { display: flex; align-items: center; justify-content: space-between; }
.head svg { margin-right: -4px; }
.aa { width: 11px; height: 11px; border: 1px solid #fde6ea; border-radius: 2px; color: #fbe0e5; font-size: 6px; line-height: 9px; text-align: center; letter-spacing: -.3px; }
.filt .hint { color: #666; padding-right: 4px; font-size: 7.150px; }
.pager { height: 39px; padding: 4px 3px 0 0; display: flex; justify-content: flex-end; font: 7.950px/17px "DejaVu Sans Mono", monospace; color: #333; }
.pg { width: 14px; height: 17px; background: #efefef; text-align: center; font: bold 13px/15px "Liberation Sans", sans-serif; color: #000; }
.pg.narrow { width: 11px; }
.pg.off { background: #fafafa; color: #b5b5b5; font-weight: normal; }
.pg.off.narrow { margin-left: 7px; }
.pg-input { margin-left: 3px; width: 30px; border-bottom: 1px solid #ccc; text-align: center; height: 18px; line-height: 19px; }
.pg-sep { margin: 0 8px 0 2px; } .next { margin-left: 7px; } .last { margin-left: 7px; }

.widgets { display: flex; padding-top: 5px; }
.chart { width: 467px; height: 333px; }
h2 { margin: 21px 0 0 23.500px; font: 11.300px/15px "DejaVu Sans", sans-serif; color: #2a3f5f; letter-spacing: .05px; }
.chart-body { display: flex; padding-top: 34px; }
.pie { margin: 5.500px 0 0 53px; }
.legend { list-style: none; margin: 0 0 0 12px; padding: 0; width: 220px; font: 8px/12.700px "DejaVu Sans", sans-serif; color: #5a6576; letter-spacing: -.03px; }
.legend li { display: flex; align-items: center; height: 12.700px; white-space: nowrap; }
.legend i { width: 8.500px; height: 8.500px; margin-right: 9px; }
.legend-scroll { width: 4.500px; height: 14px; border-radius: 2px; background: #808ba5; margin-left: 13px; }
.pie text { font-family: "DejaVu Sans", sans-serif; fill: #444; }

.map { position: relative; width: 667px; height: 333px; overflow: hidden; }
.shield text { font: bold 19px "Open Sans", sans-serif; fill: #8c3a58; }
.place text { font: 19px "Open Sans", "Noto Sans", sans-serif; fill: #3c3c3c; stroke: #fff; stroke-width: 3px; stroke-opacity: .6; paint-order: stroke; }
.place .city { font-size: 24px; }
.place .county { font-style: italic; font-weight: 600; fill: #b084b5; }
.place .park { font-style: italic; font-weight: 600; fill: #3f9459; }
.place .lake { font-style: italic; fill: #5d99bd; }
.zoom-control { position: absolute; left: 7px; top: 7px; width: 22px; height: 43px; border: 1px solid #b8b7b3; border-radius: 3px; background: #fff; font: bold 15px/20px "Liberation Sans", sans-serif; text-align: center; }
.zoom-control span { display: block; height: 20.500px; }
.zoom-control span:first-child { border-bottom: 1px solid #ccc; }
.marker { position: absolute; left: 214.500px; top: 183px; }
.popup { position: absolute; left: 152.500px; top: 109px; width: 142px; height: 69px; padding: 14px; background: #fff; border-radius: 8px; box-shadow: 0 2px 9px rgba(0,0,0,.4); color: #333; font: 8.700px/11px "Liberation Sans", sans-serif; }
.popup::after { content: ""; position: absolute; left: 62px; top: 69px; border: 9px solid transparent; border-top: 9px solid #fff; border-bottom: 0; }
.popup strong { display: block; font-size: 17px; line-height: 18px; letter-spacing: .2px; white-space: nowrap; }
.popup p { margin: 13px 0 0; }
.popup-close { position: absolute; right: 3px; top: 3px; width: 10px; text-align: center; font-size: 11px; color: #757575; }
.attribution { position: absolute; right: 0; bottom: 0; width: 41px; height: 11px; padding-left: 3px; background: rgba(255,255,255,.85); display: flex; align-items: center; gap: 2.500px; font: 8px/11px "Liberation Sans", sans-serif; color: #0078a8; }
.debug { position: absolute; left: 1837px; top: 845px; width: 43px; height: 43px; border-radius: 50%; background: #119dff; display: grid; place-items: center; }

.scrollbar { width: 9px; background: #f1f1f1; display: flex; flex-direction: column; align-items: center; padding: 7px 0 6px 2px; }
.arrow { border: 4px solid transparent; border-top: 0; border-bottom: 4px solid #505050; }
.arrow.down { border-bottom: 0; border-top: 4px solid #a3a3a3; margin-top: 6px; }
.thumb { width: 100%; flex: 1; margin-top: 85px; background: #c1c1c1; }
```
FILE: app.js
```js
const widths = [20, 100, 113, 107, 109, 194, 109, 115, 115, 114, 113, 111, 113, 112, 113, 128, 106];
const columns = ["", "age_upon_outcome", "animal_id", "animal_type", "breed", "color", "date_of_birth", "datetime", "monthyear", "outcome_subtype", "outcome_type", "sex_upon_outcome", "location_lat", "location_long", "age_upon_outcome_in_weeks", "name"];
const rows = `1|3 years|A746874|Cat|Domestic Shorthair Mix|Black/White|2014-04-10T00:00:00|2017-04-11 09:00:00|2017-04-11T09:00:00|SCRP|Transfer|Neutered Male|30.5066578739455|-97.3408780722188|156.767857142857|
2|1 year|A725717|Cat|Domestic Shorthair Mix|Silver Tabby|2015-05-02T00:00:00|2016-05-06 10:49:00|2016-05-06T10:49:00|SCRP|Transfer|Spayed Female|30.6525984560228|-97.7419963476444|52.9215277777778|
3|2 years|A716330|Dog|Chihuahua Shorthair Mix|Brown/White|2013-11-18T00:00:00|2015-12-28 18:43:00|2015-12-28T18:43:00||Adoption|Neutered Male|30.7595748121648|-97.5523753807133|110.111408730159|Frank
4|7 months|A733653|Cat|Siamese Mix|Seal Point|2016-01-25T00:00:00|2016-08-27 18:11:00|2016-08-27T18:11:00||Adoption|Intact Female|30.3188063374257|-97.7240376703891|30.8225198412698|Kitty
5|2 years|A691584|Dog|Labrador Retriever Mix|Tan/White|2012-11-06T00:00:00|2015-05-30 13:48:00|2015-05-30T13:48:00||Return to Owner|Neutered Male|30.7104815618433|-97.562297435286|133.653571428571|Luke
6|5 years|A696004|Dog|Cardigan Welsh Corgi Mix|Sable/White|2010-01-27T00:00:00|2015-01-28 10:39:00|2015-01-28T10:39:00|Rabies Risk|Euthanasia|Spayed Female|30.6737365854231|-97.707971529467|261.063392857143|Lucy
7|2 years|A673830|Dog|Pit Bull Mix|Black/White|2012-03-03T00:00:00|2014-03-19 15:15:00|2014-03-19T15:15:00|Aggressive|Euthanasia|Neutered Male|30.2954256583441|-97.3136642110436|106.662202380952|*Seth
8|1 year|A736551|Dog|Labrador Retriever/Australian Cattle Dog|Black|2015-10-12T00:00:00|2016-11-27 18:00:00|2016-11-27T18:00:00||Adoption|Spayed Female|30.4443212820182|-97.7326980338793|58.9642857142857|*Mia
9|3 years|A720214|Dog|Labrador Retriever Mix|Red/White|2013-02-04T00:00:00|2016-02-11 12:41:00|2016-02-11T12:41:00||Adoption|Spayed Female|30.3870648199411|-97.3684339731375|157.504067460317|Blessing
10|3 months|A664290|Cat|Domestic Shorthair Mix|Tortie|2013-09-01T00:00:00|2013-12-08 14:58:00|2013-12-08T14:58:00||Adoption|Spayed Female|30.7583105481048|-97.618292198845|14.0890873015873|*Taylor`.split("\n").map(r => r.split("|"));

const sort = '<svg width="5" height="8" viewBox="0 0 5 8"><path d="M0 3.500 2.500 .3 5 3.500ZM0 4.500 2.500 7.700 5 4.500Z" fill="#a5a5a5"/></svg>';
document.getElementById("grid").innerHTML =
  "<colgroup>" + widths.map(w => `<col style="width:${w}px">`).join("") + "</colgroup><thead><tr><th></th>" +
  columns.map(c => `<th><div class="head">${sort}<span>${c}</span></div></th>`).join("") + "</tr><tr><th></th>" +
  columns.map((c, i) => `<th><div class="filt"><span class="aa">Aa</span>${i ? "" : '<span class="hint">filter data...</span>'}</div></th>`).join("") +
  "</tr></thead><tbody>" +
  rows.map(r => `<tr><td><i class="radio${r[0] === "6" ? " on" : ""}"></i></td>` + r.map(v => `<td>${v}</td>`).join("") + "</tr>").join("") + "</tbody>";

const breeds = [["Domestic Shorthair Mix", "#636efa", 30.1], ["Pit Bull Mix", "#ef553b", 8.01], ["Labrador Retriever Mix", "#00cc96", 6.08], ["Chihuahua Shorthair Mix", "#ab63fa", 5.88], ["Domestic Medium Hair Mix", "#ffa15a", 3.24], ["German Shepherd Mix", "#19d3f3", 2.41], ["Bat Mix", "#ff6692", 1.88], ["Domestic Longhair Mix", "#b6e880", 1.52], ["Australian Cattle Dog Mix", "#ff97ff", 1.23], ["Bat", "#fecb52", 1.08], ["Siamese Mix", "#c5caff", 0.97], ["Dachshund Mix", "#f7a799", 0.9], ["Miniature Poodle Mix", "#33ffc9", 0.85], ["Boxer Mix", "#e2c8fd", 0.8]];
document.getElementById("legend").innerHTML = breeds.map(b => `<li><i style="background:${b[1]}"></i>${b[0]}</li>`).join("");

const light = ["#ffdbc0", "#79e5f8", "#ffccda", "#e3f7cf", "#fffdfd", "#ffe4a7"];
const dark = ["#0718ef", "#b52b10", "#00664b", "#7a0df8", "#f36b00", "#0989a0", "#ff004e", "#8ddb35", "#ff30ff", "#fdb100"];
const base = breeds.slice(0, 10).map(b => b[1]);
const tail = ["#c5caff", "#f7a799", "#33ffc9", "#e2c8fd"].concat(light);
const cycle = dark.concat(base, tail);
const pt = (r, pct) => { const a = pct / 100 * 2 * Math.PI; return (-r * Math.sin(a)).toFixed(2) + " " + (-r * Math.cos(a)).toFixed(2); };
const wedge = (from, to, fill) => `<path fill="${fill}" d="M${pt(24, from)}L${pt(79.5, from)}A79.5 79.5 0 0 0 ${pt(79.5, to)}L${pt(24, to)}A24 24 0 0 1 ${pt(24, from)}Z"/>`;
let out = wedge(-30.1, 0, base[0]), at = 0, labels = "";
const sizes = [0, 8, 8, 8, 8, 7.6, 6.3, 5.3, 4.6, 4.2, 3.8, 3.5, 3.3, 3.1];
breeds.forEach((b, i) => {
  if (!i) return;
  out += wedge(at, at + b[2], b[1]);
  const mid = at + b[2] / 2, s = sizes[i], text = b[2] + "%";
  const r = i === 1 ? 64 : i === 2 ? 59 : i < 4 ? 61 : 79 - s * text.length * .32;
  const turn = i === 1 ? 0 : 90 - mid * 3.6;
  labels += `<text font-size="${s}" text-anchor="middle" transform="translate(${pt(r, mid).replace(" ", ",")}) rotate(${turn})" dy=".36em">${text}</text>`;
  at += b[2];
});
light.forEach((c, i) => {
  const w = .76 - i * .055;
  out += wedge(at, at + w, c);
  labels += `<text font-size="2.6" text-anchor="middle" transform="translate(${pt(74, at + w / 2).replace(" ", ",")}) rotate(${90 - (at + w / 2) * 3.6})" dy=".36em">${w.toFixed(3)}%</text>`;
  at += w;
});
for (let n = 21; at < 64.5; n++) {
  const w = Math.max(.4 * Math.pow(21 / n, 1.2), .022);
  out += wedge(at, at + w, cycle[(n - 21) % cycle.length]);
  at += w;
}
// the rarest breeds have slices thinner than a pixel and read as coloured grain
out += wedge(at, 69.9, "#d5cdd2");
let seed = 7;
const rand = () => (seed = (seed * 16807) % 2147483647) / 2147483647;
for (let k = 0; k < 1500; k++) {
  const pos = at + .15 + rand() * (69.9 - at - .45), r = Math.sqrt(600 + rand() * (6240 - 600));
  const [x, y] = pt(r, pos).split(" ");
  out += `<rect x="${x}" y="${y}" width=".9" height=".9" opacity=".45" fill="${cycle[Math.floor(rand() * cycle.length)]}"/>`;
}
labels += '<text font-size="8" x="42" y="-28" text-anchor="middle" style="fill:#fff">30.1%</text>';
document.getElementById("pie").innerHTML = out + labels;
```
